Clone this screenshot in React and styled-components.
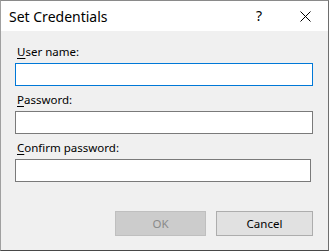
import React from "react";
import styled, { createGlobalStyle } from "styled-components";

const Global = createGlobalStyle`
  html, body { margin: 0; padding: 0; background: #f0f0f0; }
  * { box-sizing: border-box; }
`;

const Window = styled.div`
  width: 329px;
  height: 251px;
  display: flex;
  flex-direction: column;
  border-top: 1px solid #8a8a8a;
  border-left: 1px solid #a0a0a0;
  border-right: 1px solid #6e6e6e;
  border-bottom: 1px solid #484848;
  background: #f0f0f0;
  font-family: "Noto Sans", "Open Sans", sans-serif;
  font-size: 11.5px;
  color: #000;
`;

const TitleBar = styled.div`
  height: 30px;
  flex: none;
  display: flex;
  align-items: center;
  background: #fff;
  padding-left: 8px;
`;

const Title = styled.div`
  flex: 1;
  font-size: 14px;
  line-height: 18px;
  margin-top: 1px;
`;

const CaptionButton = styled.div`
  width: 46px;
  height: 30px;
  display: flex;
  align-items: center;
  justify-content: center;
  font-size: 14px;
  line-height: 18px;
`;

const Body = styled.div`
  flex: 1;
  display: flex;
  flex-direction: column;
  padding: 13px 15px 14px 14px;
`;

const Field = styled.div`
  display: flex;
  flex-direction: column;
  margin-bottom: 6px;
`;

const Label = styled.label`
  display: block;
  height: 16px;
  line-height: 16px;
  margin: 0 0 3px 2px;
  white-space: nowrap;
`;

const Key = styled.span`
  text-decoration: underline;
  text-underline-offset: 2px;
`;

const Input = styled.input`
  display: block;
  width: ${(p) => p.$width || "298px"};
  height: 23px;
  margin: 0;
  padding: 0 3px;
  border: 1px solid ${(p) => (p.$focused ? "#0078d7" : "#7a7a7a")};
  background: #fff;
  outline: none;
  font: inherit;
`;

const ButtonRow = styled.div`
  margin-top: auto;
  display: flex;
  justify-content: flex-end;
  gap: 10px;
`;

const Button = styled.button`
  width: ${(p) => p.$width};
  height: 25px;
  margin: 0;
  padding: 0;
  font: inherit;
  border: 1px solid ${(p) => (p.disabled ? "#bfbfbf" : "#adadad")};
  background: ${(p) => (p.disabled ? "#cccccc" : "#e1e1e1")};
  color: ${(p) => (p.disabled ? "#8a8a8a" : "#000")};
`;

const CloseIcon = () => (
  <svg width="11" height="11" viewBox="0 0 11 11">
    <path d="M0.5 0.5 L10.5 10.5 M10.5 0.5 L0.5 10.5" stroke="#000" strokeWidth="1" fill="none" />
  </svg>
);

export default function App() {
  return (
    <>
      <Global />
      <Window>
        <TitleBar>
          <Title>Set Credentials</Title>
          <CaptionButton>?</CaptionButton>
          <CaptionButton>
            <CloseIcon />
          </CaptionButton>
        </TitleBar>
        <Body>
          <Field>
            <Label><Key>U</Key>ser name:</Label>
            <Input $focused />
          </Field>
          <Field>
            <Label><Key>P</Key>assword:</Label>
            <Input type="password" />
          </Field>
          <Field>
            <Label><Key>C</Key>onfirm password:</Label>
            <Input type="password" $width="296px" />
          </Field>
          <ButtonRow>
            <Button disabled $width="91px">OK</Button>
            <Button $width="97px">Cancel</Button>
          </ButtonRow>
        </Body>
      </Window>
    </>
  );
}
